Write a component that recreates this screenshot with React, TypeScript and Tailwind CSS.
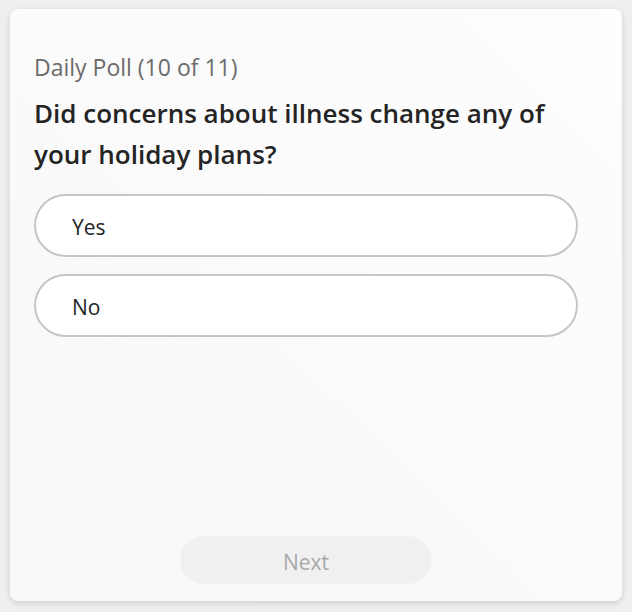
import React, { useState } from 'react'

const options = ['Yes', 'No']

export default function App() {
    const [selected, setSelected] = useState<number | null>(null)

    return (
        <div
            className="w-[632px] h-[612px] bg-[#efefee] pt-[9px] pl-[10px]"
            style={{ fontFamily: '"Open Sans", "Noto Sans", sans-serif' }}
        >
            <div className="w-[612px] h-[592px] rounded-[8px] bg-gradient-to-tr from-[#f8f8f8] to-[#fdfdfd] shadow-[0_2px_6px_rgba(0,0,0,0.14)] flex flex-col px-[24px] pt-[43px] pb-[17px]">
                {/* Header */}
                <p className="text-[23px] leading-[30px] text-[#6b6b6b]">Daily Poll (10 of 11)</p>
                <h1 className="mt-[11px] text-[26px] leading-[41px] font-semibold text-[#242424] pr-[20px]">
                    Did concerns about illness change any of your holiday plans?
                </h1>

                {/* Options */}
                <div className="mt-[19px] flex flex-col gap-[17px] w-[544px]">
                    {options.map((opt, i) => (
                        <button
                            key={opt}
                            onClick={() => setSelected(i)}
                            className={`h-[63px] rounded-full border-2 text-left pl-[36px] pt-[4px] text-[21px] text-[#242424] ${
                                selected === i ? 'border-[#6264a7] bg-white' : 'border-[#c6c6c6] bg-white'
                            }`}
                        >
                            {opt}
                        </button>
                    ))}
                </div>

                {/* Footer */}
                <div className="mt-auto flex justify-center">
                    <button className="w-[252px] h-[48px] rounded-full bg-[#f0f0f0] pt-[5px] text-[21px] text-[#a8a8a8] mr-[20px]">
                        Next
                    </button>
                </div>
            </div>
        </div>
    )
}
